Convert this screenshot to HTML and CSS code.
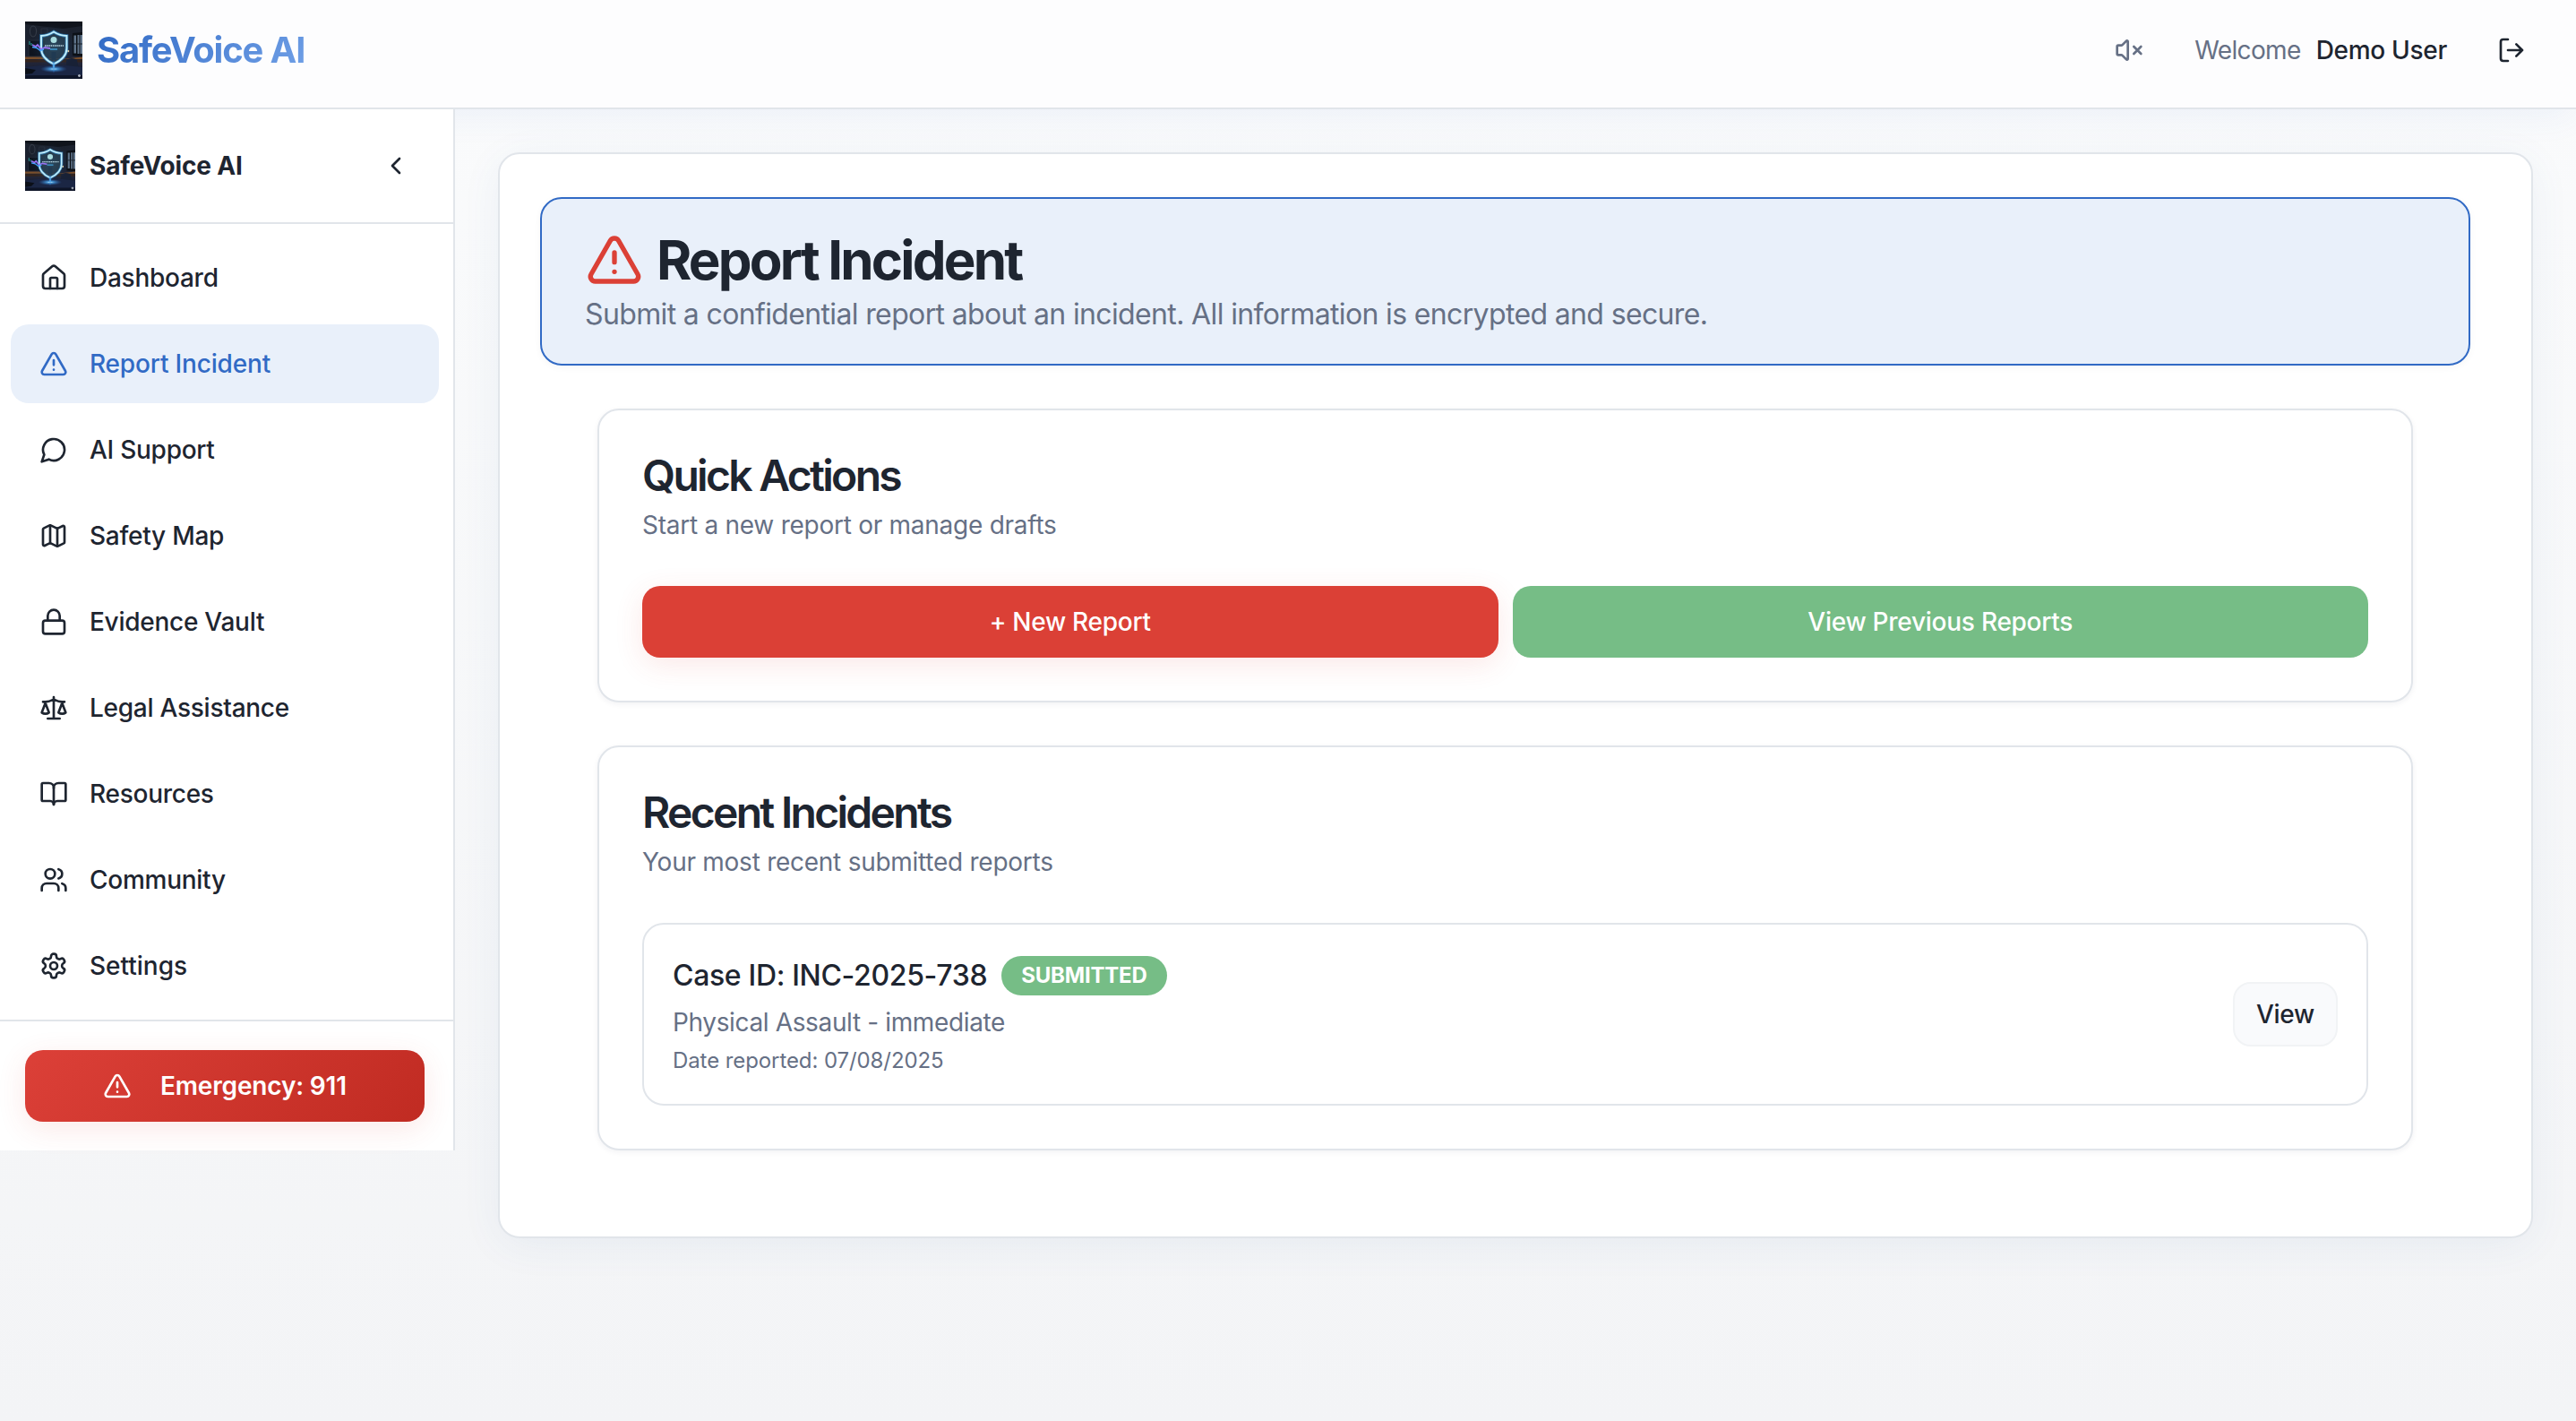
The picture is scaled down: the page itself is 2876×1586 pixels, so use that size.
FILE: index.html
```html
<!DOCTYPE html>
<html lang="en">
<head>
<meta charset="utf-8">
<title>SafeVoice AI</title>
<link rel="stylesheet" href="styles.css">
</head>
<body>
<svg class="defs" width="0" height="0" aria-hidden="true">
  <defs>
    <linearGradient id="room" x1="0" y1="0" x2="0" y2="1">
      <stop offset="0" stop-color="#1c222d"/><stop offset=".55" stop-color="#1a2030"/>
      <stop offset=".7" stop-color="#232639"/><stop offset="1" stop-color="#10172a"/>
    </linearGradient>
    <radialGradient id="halo"><stop offset="0" stop-color="#3f8fc8" stop-opacity=".4"/><stop offset="1" stop-color="#1c3f66" stop-opacity="0"/></radialGradient>
    <radialGradient id="spot"><stop offset="0" stop-color="#d8f7ff"/><stop offset=".3" stop-color="#4aa8ee" stop-opacity=".8"/><stop offset="1" stop-color="#2a5fae" stop-opacity="0"/></radialGradient>
    <symbol id="logo" viewBox="0 0 64 64">
      <rect width="64" height="64" fill="url(#room)"/>
      <path d="M0 0h64v5L42 8 0 3z" fill="#10141c"/>
      <ellipse cx="9" cy="11" rx="3.600" ry="6" fill="none" stroke="#343b47" stroke-width="1.200"/>
      <path d="M18 8h7v10h-7z" fill="none" stroke="#2a303c"/>
      <path d="M53 13l11-1v27l-11-1z" fill="#0c1016"/>
      <path d="M54.500 15.500h2.500v20h-2.500zM58.500 15h2v21h-2zM61.500 15H64v21h-2.500z" fill="#5f7389"/>
      <path d="M54 25h10" stroke="#1b222c" stroke-width="1"/>
      <path d="M4 21h19v18H4z" fill="#0e141f" stroke="#252c39"/>
      <path d="M0 39.500h18l4 2h24l18-2v2.500H0z" fill="#7a4f2a"/>
      <path d="M0 42.500h64v3H0z" fill="#33241e"/>
      <path d="M46 43q6-4 12 0l2 11H46z" fill="#182136"/>
      <path d="M0 51q32-5 64 0v13H0z" fill="#1b2644"/>
      <path d="M0 52l12 2-4 4-8 1z" fill="#0b0f18"/>
      <path d="M0 60h64v4H0z" fill="#0e1528"/>
      <circle cx="48" cy="33" r="1.300" fill="#ffd9a0"/>
      <circle cx="32" cy="28" r="25" fill="url(#halo)"/>
      <path d="M32 11.500q7 4.500 14.500 4.500v14c0 9-7 14-14.500 17.500C24.500 44 18 39 18 30V16q7 0 14-4.500z" fill="#2c4656" fill-opacity=".6" stroke="#3a9fe6" stroke-opacity=".6" stroke-width="3.600"/>
      <path d="M32 11.500q7 4.500 14.500 4.500v14c0 9-7 14-14.500 17.500C24.500 44 18 39 18 30V16q7 0 14-4.500z" fill="none" stroke="#c0effd" stroke-width="1.900"/>
      <circle cx="32" cy="20.500" r="3.500" fill="#a9dde0"/>
      <path d="M22 27h21" stroke="#b9d8e4" stroke-width="1.600" stroke-dasharray="1.500 .7"/>
      <path d="M28 31h8" stroke="#3f9ad0" stroke-width="1.500"/>
      <path d="M29.500 34h5v9h-5z" fill="#203a52"/>
      <path d="M8 26l4 2 2-2 4 5 4-2 6 1" fill="none" stroke="#9a72f4" stroke-width="1.800"/>
      <path d="M8 28.500l5 1 4 3 4-1.500" fill="none" stroke="#45a5ff" stroke-width="1.400"/>
      <path d="M5 22v4M7 24v3" stroke="#2fa7a7"/>
      <ellipse cx="32" cy="53" rx="15" ry="4" fill="url(#spot)"/>
      <ellipse cx="32" cy="50" rx="2" ry="8" fill="url(#spot)"/>
      <path d="M59 60.500h3M60.500 59v3" stroke="#a9afbb" stroke-width="1.500"/>
    </symbol>
    <symbol id="alert" viewBox="0 0 24 24"><path d="m21.730 18-8-14a2 2 0 0 0-3.480 0l-8 14A2 2 0 0 0 4 21h16a2 2 0 0 0 1.730-3"/><path d="M12 9v4M12 17h.01"/></symbol>
    <symbol id="house" viewBox="0 0 24 24"><path d="M15 21v-8a1 1 0 0 0-1-1h-4a1 1 0 0 0-1 1v8"/><path d="M3 10a2 2 0 0 1 .709-1.528l7-5.999a2 2 0 0 1 2.582 0l7 5.999A2 2 0 0 1 21 10v9a2 2 0 0 1-2 2H5a2 2 0 0 1-2-2z"/></symbol>
    <symbol id="chat" viewBox="0 0 24 24"><path d="M7.900 20A9 9 0 1 0 4 16.100L2 22Z"/></symbol>
    <symbol id="map" viewBox="0 0 24 24"><path d="M14.106 5.553a2 2 0 0 0 1.788 0l3.659-1.830A1 1 0 0 1 21 4.619v12.764a1 1 0 0 1-.553.894l-4.553 2.277a2 2 0 0 1-1.788 0l-4.212-2.106a2 2 0 0 0-1.788 0l-3.659 1.830A1 1 0 0 1 3 19.381V6.618a1 1 0 0 1 .553-.894l4.553-2.277a2 2 0 0 1 1.788 0z"/><path d="M15 5.764v15M9 3.236v15"/></symbol>
    <symbol id="lock" viewBox="0 0 24 24"><rect width="18" height="11" x="3" y="11" rx="2"/><path d="M7 11V7a5 5 0 0 1 10 0v4"/></symbol>
    <symbol id="scale" viewBox="0 0 24 24"><path d="m16 16 3-8 3 8c-.870.650-1.920 1-3 1s-2.130-.350-3-1ZM2 16l3-8 3 8c-.870.650-1.920 1-3 1s-2.130-.350-3-1ZM7 21h10M12 3v18M3 7h2c2 0 5-1 7-2 2 1 5 2 7 2h2"/></symbol>
    <symbol id="book" viewBox="0 0 24 24"><path d="M12 7v14"/><path d="M3 18a1 1 0 0 1-1-1V4a1 1 0 0 1 1-1h5a4 4 0 0 1 4 4 4 4 0 0 1 4-4h5a1 1 0 0 1 1 1v13a1 1 0 0 1-1 1h-6a3 3 0 0 0-3 3 3 3 0 0 0-3-3z"/></symbol>
    <symbol id="users" viewBox="0 0 24 24"><path d="M16 21v-2a4 4 0 0 0-4-4H6a4 4 0 0 0-4 4v2"/><circle cx="9" cy="7" r="4"/><path d="M22 21v-2a4 4 0 0 0-3-3.870M16 3.130a4 4 0 0 1 0 7.750"/></symbol>
    <symbol id="gear" viewBox="0 0 24 24"><path d="M12.220 2h-.440a2 2 0 0 0-2 2v.180a2 2 0 0 1-1 1.730l-.430.250a2 2 0 0 1-2 0l-.150-.080a2 2 0 0 0-2.730.730l-.220.380a2 2 0 0 0 .730 2.730l.150.100a2 2 0 0 1 1 1.720v.510a2 2 0 0 1-1 1.740l-.150.090a2 2 0 0 0-.730 2.730l.220.380a2 2 0 0 0 2.730.730l.150-.080a2 2 0 0 1 2 0l.430.250a2 2 0 0 1 1 1.730V20a2 2 0 0 0 2 2h.440a2 2 0 0 0 2-2v-.180a2 2 0 0 1 1-1.730l.430-.250a2 2 0 0 1 2 0l.150.080a2 2 0 0 0 2.730-.730l.220-.390a2 2 0 0 0-.730-2.730l-.150-.080a2 2 0 0 1-1-1.740v-.500a2 2 0 0 1 1-1.740l.150-.090a2 2 0 0 0 .730-2.730l-.220-.380a2 2 0 0 0-2.730-.730l-.150.080a2 2 0 0 1-2 0l-.430-.250a2 2 0 0 1-1-1.730V4a2 2 0 0 0-2-2z"/><circle cx="12" cy="12" r="3"/></symbol>
    <symbol id="chevron" viewBox="0 0 24 24"><path d="m15 18-6-6 6-6"/></symbol>
    <symbol id="mute" viewBox="0 0 24 24"><path d="M11 4.702a.705.705 0 0 0-1.203-.498L6.413 7.587A1.400 1.400 0 0 1 5.416 8H3a1 1 0 0 0-1 1v6a1 1 0 0 0 1 1h2.416a1.400 1.400 0 0 1 .997.413l3.383 3.384A.705.705 0 0 0 11 19.298z"/><path d="m22 9-6 6M16 9l6 6"/></symbol>
    <symbol id="logout" viewBox="0 0 24 24"><path d="M9 21H5a2 2 0 0 1-2-2V5a2 2 0 0 1 2-2h4M16 17l5-5-5-5M21 12H9"/></symbol>
  </defs>
</svg>

<header class="topbar">
  <div class="brand">
    <svg class="brand-logo"><use href="#logo"/></svg>
    <span class="brand-name">SafeVoice AI</span>
  </div>
  <div class="account">
    <svg class="icon icon-mute"><use href="#mute"/></svg>
    <span class="welcome">Welcome</span>
    <span class="user">Demo User</span>
    <svg class="icon icon-logout"><use href="#logout"/></svg>
  </div>
</header>

<div class="layout">
  <aside class="sidebar">
    <div class="side-head">
      <svg class="side-logo"><use href="#logo"/></svg>
      <span class="side-name">SafeVoice AI</span>
      <svg class="icon side-toggle"><use href="#chevron"/></svg>
    </div>
    <nav class="nav">
      <a class="nav-item"><svg class="icon"><use href="#house"/></svg>Dashboard</a>
      <a class="nav-item active"><svg class="icon"><use href="#alert"/></svg>Report Incident</a>
      <a class="nav-item"><svg class="icon"><use href="#chat"/></svg>AI Support</a>
      <a class="nav-item"><svg class="icon"><use href="#map"/></svg>Safety Map</a>
      <a class="nav-item"><svg class="icon"><use href="#lock"/></svg>Evidence Vault</a>
      <a class="nav-item"><svg class="icon"><use href="#scale"/></svg>Legal Assistance</a>
      <a class="nav-item"><svg class="icon"><use href="#book"/></svg>Resources</a>
      <a class="nav-item"><svg class="icon"><use href="#users"/></svg>Community</a>
      <a class="nav-item nav-settings"><svg class="icon"><use href="#gear"/></svg>Settings</a>
    </nav>
    <div class="side-foot">
      <button class="emergency"><svg class="icon"><use href="#alert"/></svg>Emergency: 911</button>
    </div>
  </aside>

  <main class="page">
    <section class="banner">
      <h1 class="banner-title"><svg class="icon banner-icon"><use href="#alert"/></svg>Report Incident</h1>
      <p class="banner-text">Submit a confidential report about an incident. All information is encrypted and secure.</p>
    </section>
    <section class="card">
      <h2 class="card-title">Quick Actions</h2>
      <p class="card-text">Start a new report or manage drafts</p>
      <div class="actions">
        <button class="btn btn-new">+ New Report</button>
        <button class="btn btn-previous">View Previous Reports</button>
      </div>
    </section>
    <section class="card">
      <h2 class="card-title">Recent Incidents</h2>
      <p class="card-text">Your most recent submitted reports</p>
      <article class="incident">
        <div class="incident-info">
          <div class="incident-head"><span class="case">Case ID: INC-2025-738</span><span class="badge">SUBMITTED</span></div>
          <p class="incident-type">Physical Assault - immediate</p>
          <p class="incident-date">Date reported: 07/08/2025</p>
        </div>
        <button class="btn-view">View</button>
      </article>
    </section>
  </main>
</div>
</body>
</html>
```
FILE: styles.css
```css
* { box-sizing: border-box; }

body {
  margin: 0;
  min-height: 1586px;
  background: linear-gradient(180deg, #fafbfc 0%, #f3f4f6 100%);
  color: #1e2530;
  font-family: Inter, "Liberation Sans", sans-serif;
  font-size: 28px;
  line-height: 40px;
  letter-spacing: -.26px;
}

h1, h2, p { margin: 0; }
button { border: 0; font: inherit; letter-spacing: inherit; color: inherit; }

.defs { position: absolute; }

.icon {
  flex: none;
  width: 32px;
  height: 32px;
  fill: none;
  stroke: currentColor;
  stroke-width: 2;
  stroke-linecap: round;
  stroke-linejoin: round;
}

.topbar {
  position: relative;
  display: flex;
  justify-content: space-between;
  height: 122px;
  padding: 24px 56px 32px 28px;
  border-bottom: 2px solid #e1e5ea;
  background: #fdfdfe;
  box-shadow: 0 8px 40px -4px rgba(49, 108, 200, .08);
}

.brand, .account { display: flex; align-items: center; height: 64px; }
.brand-logo { width: 64px; height: 64px; margin-right: 16px; }
.brand-name {
  font-size: 40px;
  font-weight: 700;
  letter-spacing: -1.2px;
  background: linear-gradient(135deg, #316ac5, #6f9fe6);
  -webkit-background-clip: text;
  background-clip: text;
  color: transparent;
}

.icon-mute { margin-right: 57px; color: #667085; }
.welcome { margin-right: 17px; letter-spacing: -.62px; color: #667085; }
.user { font-weight: 500; letter-spacing: -.3px; }
.icon-logout { margin-left: 56px; }

.layout { display: flex; align-items: flex-start; }

.sidebar {
  position: relative;
  flex: none;
  width: 508px;
  height: 1162px;
  border-right: 2px solid #e1e5ea;
  background: #fff;
}
.side-head {
  display: flex;
  align-items: center;
  height: 128px;
  padding: 0 48px 0 28px;
  border-bottom: 2px solid #e1e5ea;
}
.side-logo { width: 56px; height: 56px; margin-right: 16px; }
.side-name { font-weight: 700; letter-spacing: -.15px; }
.side-toggle { margin-left: auto; }

.nav {
  display: flex;
  flex-direction: column;
  gap: 8px;
  padding: 16px 16px 16px 12px;
}
.nav-item {
  display: flex;
  align-items: center;
  gap: 24px;
  height: 88px;
  padding: 0 32px;
  border-radius: 20px;
  font-weight: 500;
}
.nav-item.active { background: #e9f0fa; color: #316ac5; letter-spacing: -.17px; }
.nav-settings { letter-spacing: 0; }

.side-foot { padding: 32px 32px 32px 28px; border-top: 2px solid #e1e5ea; }
.emergency {
  display: flex;
  align-items: center;
  justify-content: center;
  gap: 32px;
  width: 100%;
  height: 80px;
  border-radius: 20px;
  background: linear-gradient(135deg, #dc4038, #c02b22);
  color: #fff;
  font-weight: 600;
  letter-spacing: -.17px;
  box-shadow: 0 8px 32px rgba(220, 64, 56, .12);
}

.page {
  flex: 1;
  height: 1212px;
  margin: 48px 48px 0;
  padding: 48px 68px 0 45px;
  border: 2px solid #e1e5ea;
  border-radius: 24px;
  background: #fff;
  box-shadow: 0 8px 48px -4px rgba(49, 108, 160, .08);
}

.banner {
  height: 188px;
  padding: 38px 48px;
  border: 2px solid #316ac5;
  border-radius: 24px;
  background: #e9f0fa;
  box-shadow: 0 2px 8px rgba(0, 0, 0, .04);
}
.banner-title {
  display: flex;
  align-items: center;
  gap: 15px;
  height: 60px;
  padding-left: 1px;
  font-size: 60px;
  font-weight: 700;
  letter-spacing: -2.8px;
}
.banner-icon { width: 64px; height: 64px; color: #db4036; }
.banner-text { font-size: 32px; line-height: 61px; letter-spacing: -.64px; color: #667085; }

.card {
  margin: 48px 64px 0;
  padding: 48px;
  border: 2px solid #e1e5ea;
  border-radius: 24px;
  background: #fff;
  box-shadow: 0 2px 6px rgba(30, 37, 60, .06);
}
.card-title {
  height: 48px;
  font-size: 48px;
  line-height: 49px;
  font-weight: 600;
  letter-spacing: -2.7px;
}
.card-text { margin-top: 12px; color: #667085; }

.actions { display: grid; grid-template-columns: 1fr 1fr; gap: 16px; margin-top: 48px; }
.btn { height: 80px; border-radius: 20px; color: #fff; font-weight: 500; }
.btn-new { background: #db4036; box-shadow: 0 8px 32px rgba(220, 64, 56, .12); }
.btn-previous { background: #76bd86; }

.incident {
  display: flex;
  align-items: center;
  justify-content: space-between;
  height: 204px;
  margin-top: 48px;
  padding: 0 32px;
  border: 2px solid #e1e5ea;
  border-radius: 24px;
}
.incident-info { padding-top: 6px; }
.incident-head { display: flex; align-items: center; gap: 16px; height: 44px; }
.case { font-size: 32px; font-weight: 500; letter-spacing: -.34px; }
.badge {
  height: 44px;
  padding: 0 22px;
  border-radius: 22px;
  background: #76bd86;
  color: #fff;
  font-size: 24px;
  font-weight: 700;
  line-height: 43px;
  letter-spacing: -.2px;
}
.incident-type { margin-top: 10px; letter-spacing: -.36px; color: #667085; }
.incident-date { margin-top: 3px; font-size: 24px; letter-spacing: -.09px; color: #667085; }
.btn-view {
  height: 72px;
  padding: 0 24px;
  border: 2px solid #f1f3f5;
  border-radius: 20px;
  background: #f9fafc;
  font-weight: 500;
}
```
